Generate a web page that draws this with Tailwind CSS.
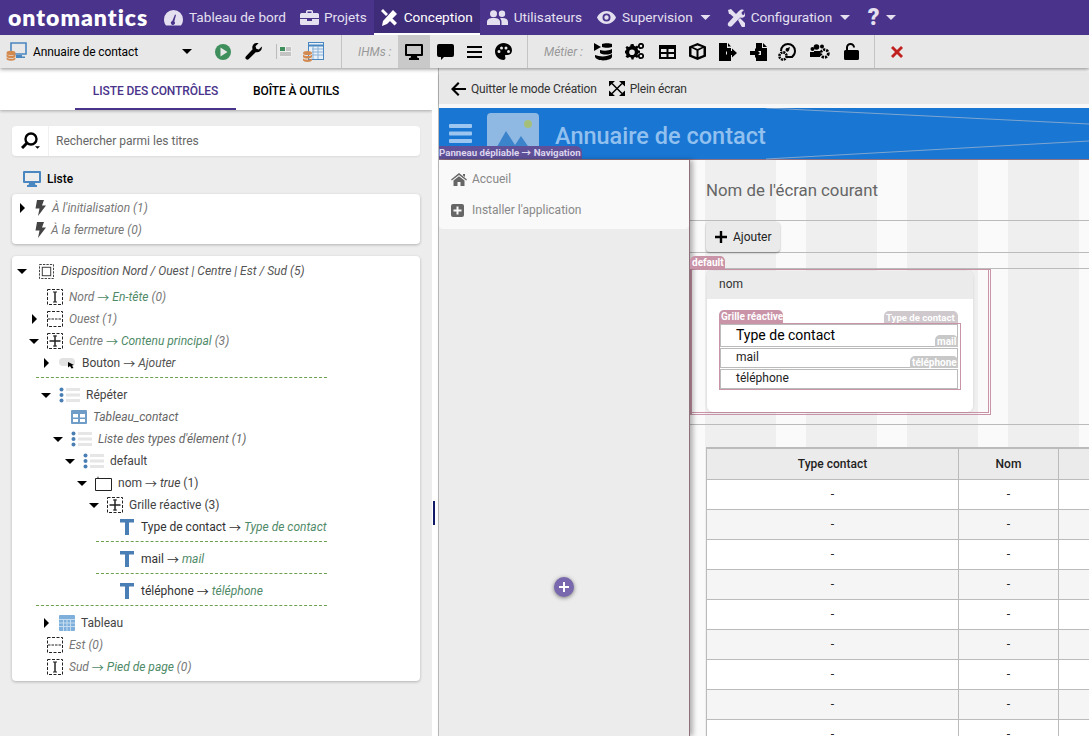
<!DOCTYPE html>
<html lang="fr">
<head>
<meta charset="utf-8">
<title>Ontomantics</title>
<script src="https://cdn.jsdelivr.net/npm/@tailwindcss/browser@4"></script>
</head>
<body class="m-0">
<svg class="hidden" xmlns="http://www.w3.org/2000/svg">
  <symbol id="cd" viewBox="0 0 10 5"><path d="M0 0h10L5 5z"/></symbol>
  <symbol id="cr" viewBox="0 0 5 10"><path d="M0 0l5 5-5 5z"/></symbol>
  <symbol id="lay-v" viewBox="0 0 16 16"><rect x=".5" y=".5" width="15" height="15" fill="none" stroke="#222" stroke-dasharray="3 1.500"/><path d="M8 3v10" stroke="#222" stroke-width="1.500" fill="none"/><path d="M6 3h4M6 13h4" stroke="#222" fill="none"/></symbol>
  <symbol id="lay-h" viewBox="0 0 16 16"><rect x=".5" y=".5" width="15" height="15" fill="none" stroke="#222" stroke-dasharray="3 1.500"/><path d="M1 8h14" stroke="#222" stroke-width="1.200" stroke-dasharray="2.500 1" fill="none"/></symbol>
  <symbol id="lay-c" viewBox="0 0 16 16"><rect x=".5" y=".5" width="15" height="15" fill="none" stroke="#222" stroke-dasharray="3 1.500"/><path d="M8 2.500v11M2.500 8h11" stroke="#222" stroke-width="1.500" fill="none"/><path d="M6 3h4M6 13h4" stroke="#222" fill="none"/></symbol>
  <symbol id="lay-d" viewBox="0 0 16 16"><rect x=".5" y=".5" width="15" height="15" fill="none" stroke="#333" stroke-dasharray="2.500 1.200"/><rect x="3.500" y="3.500" width="9" height="9" fill="none" stroke="#333"/></symbol>
  <symbol id="bolt" viewBox="0 0 11 16"><path d="M2 0h7L7 5.500h4L3 16l1.500-7.500H.5z" fill="#444"/></symbol>
  <symbol id="list" viewBox="0 0 21 16"><circle cx="2.500" cy="2.500" r="2" fill="#4a7fb5"/><circle cx="2.500" cy="8" r="2" fill="#4a7fb5"/><circle cx="2.500" cy="13.500" r="2" fill="#4a7fb5"/><path d="M7 1h14v3H7zM7 6.500h14v3H7zM7 12h14v3H7z" fill="#e6e6e6"/></symbol>
  <symbol id="tt" viewBox="0 0 14 16"><path d="M0 0h14v3.500H9V16H5V3.500H0z" fill="#4a7fb5"/></symbol>
  <symbol id="mon" viewBox="0 0 18 16"><path d="M1 0h16a1 1 0 0 1 1 1v10a1 1 0 0 1-1 1h-5l.5 2H14v2H4v-2h1.500l.5-2H1a1 1 0 0 1-1-1V1a1 1 0 0 1 1-1zm1 2v8h14V2z"/></symbol>
</svg>

<div class="w-[1089px] h-[736px] overflow-hidden flex flex-col bg-white text-[12px] text-[#222]" style="font-family:Roboto,'Liberation Sans',sans-serif">

  <!-- top navigation -->
  <header class="h-[35px] shrink-0 bg-[#49338b] flex items-stretch text-[13.6px] text-[#e4e0f0] z-30">
    <div class="ml-[8px] w-[140px] flex items-center text-white text-[23px] font-extrabold tracking-[1px] leading-none" style="font-family:Lato,sans-serif">ontomantics</div>
    <div class="ml-[16px] flex items-center gap-[6px]">
      <svg class="w-[19px] h-[16px]" viewBox="0 0 19 16" fill="#e4e0f0"><path d="M9.500 0A9.500 9.500 0 0 0 0 9.500c0 2.500.8 4.600 2 6h15c1.200-1.400 2-3.500 2-6A9.500 9.500 0 0 0 9.500 0zm.8 11.500a2 2 0 1 1-2-.5L11 4.500l1 .5z"/></svg>
      <span>Tableau de bord</span>
    </div>
    <div class="ml-[14px] flex items-center gap-[5px]">
      <svg class="w-[19px] h-[15px]" viewBox="0 0 19 15" fill="#e4e0f0"><path d="M6 3V1.500A1.500 1.500 0 0 1 7.500 0h4A1.500 1.500 0 0 1 13 1.500V3h4.500A1.500 1.500 0 0 1 19 4.500V8H0V4.500A1.500 1.500 0 0 1 1.500 3zm1.500 0h4V1.500h-4zM0 9h7v2h5V9h7v4.500a1.500 1.500 0 0 1-1.500 1.500h-16A1.500 1.500 0 0 1 0 13.500z"/></svg>
      <span>Projets</span>
    </div>
    <div class="ml-[7px] w-[106px] pl-[7px] pt-[2px] flex items-center gap-[6px] bg-[#3f2c78] text-white border-b-2 border-white">
      <svg class="w-[17px] h-[17px]" viewBox="0 0 17 17" fill="#fff"><path d="M2 0l5 5-2 2-5-5zM12 1l4 4-10 10-5 2 1-5zM11 9l5 5-2.500 2.500-5-5z"/></svg>
      <span>Conception</span>
    </div>
    <div class="ml-[7px] flex items-center gap-[6px]">
      <svg class="w-[21px] h-[15px]" viewBox="0 0 21 15" fill="#e4e0f0"><circle cx="6.500" cy="3.800" r="3.500"/><circle cx="15" cy="3.800" r="3.200"/><path d="M0 15v-3c0-2.500 2-4 6.500-4S13 9.500 13 12v3zM14.500 15v-3c0-1.500-.5-2.800-1.500-3.800.7-.2 1.400-.2 2-.2 4 0 6 1.500 6 4v3z"/></svg>
      <span>Utilisateurs</span>
    </div>
    <div class="ml-[15px] flex items-center gap-[6px]">
      <svg class="w-[19px] h-[13px]" viewBox="0 0 19 13" fill="#e4e0f0"><path fill-rule="evenodd" d="M9.500 0C14 0 17.500 3 19 6.500 17.500 10 14 13 9.500 13S1.500 10 0 6.500C1.500 3 5 0 9.500 0zm0 2.500a4 4 0 1 0 0 8 4 4 0 0 0 0-8zm0 1.800a2.200 2.200 0 1 1 0 4.400 2.200 2.200 0 0 1 0-4.400z"/></svg>
      <span>Supervision</span>
      <svg class="ml-[1px] w-[11px] h-[5px] fill-[#e4e0f0]"><use href="#cd"/></svg>
    </div>
    <div class="ml-[16px] flex items-center gap-[6px]">
      <svg class="w-[18px] h-[18px]" viewBox="0 0 18 18" fill="#e4e0f0"><path d="M1 1l3-1 5 5 3-3c1-1.500 3.500-2 5-1l-2.500 2.500.5 2 2 .5L18 3c1 1.500.5 4-1 5-1.500 1-3 1-4 .5L5 17c-1 1-2.500 1-3.500 0s-1-2.500 0-3.500L6.500 8 3 5H2zM11 11l2-2 5 5c1 1 1 2.500 0 3.500s-2.500 1-3.500 0z"/></svg>
      <span>Configuration</span>
      <svg class="ml-[1px] w-[12px] h-[5px] fill-[#e4e0f0]"><use href="#cd"/></svg>
    </div>
    <div class="ml-[16px] flex items-center gap-[6px]">
      <span class="w-[13px] text-[23px] font-black leading-none text-center">?</span>
      <svg class="w-[10px] h-[5px] fill-[#e4e0f0]"><use href="#cd"/></svg>
    </div>
  </header>

  <!-- main toolbar -->
  <div class="h-[33px] shrink-0 bg-[#e8e8e8] flex items-center shadow-[0_1px_4px_rgba(0,0,0,0.45)] z-20 relative text-black">
    <svg class="ml-[6px] w-[21px] h-[19px]" viewBox="0 0 21 19"><path d="M5 1h15v11H5z" fill="none" stroke="#4a86c0" stroke-width="1.600"/><path d="M10 13h6v1.500h3V16h-9z" fill="#4a86c0"/><ellipse cx="5" cy="11" rx="4.500" ry="2.200" fill="#d48a4e"/><path d="M.5 12v2.200c0 1 2 2 4.500 2s4.500-1 4.500-2V12c-1 1-2.500 1.800-4.500 1.800S1.500 13 .5 12z" fill="#d48a4e"/><path d="M.5 15.500v1.300c0 1 2 2 4.500 2s4.500-1 4.500-2v-1.300c-1 .9-2.500 1.400-4.500 1.400s-3.500-.5-4.500-1.400z" fill="#d48a4e"/></svg>
    <span class="ml-[6px] w-[149px] tracking-[-0.1px]">Annuaire de contact</span>
    <svg class="w-[10px] h-[5px]"><use href="#cd"/></svg>
    <svg class="ml-[23px] w-[16px] h-[16px]" viewBox="0 0 16 16"><circle cx="8" cy="8" r="8" fill="#3f8f5c"/><path d="M5.500 3.500l7 4.500-7 4.500z" fill="#e8e8e8"/></svg>
    <svg class="ml-[14px] w-[17px] h-[17px]" viewBox="0 0 17 17"><path d="M16.800 3.500l-3 3-2.500-.8-.8-2.500 3-3c-2-.6-4.200 0-5.300 1.500-1 1.300-1.200 3-.6 4.500L.8 13.400a2 2 0 0 0 2.800 2.800l7.100-7a5 5 0 0 0 6.100-5.700z"/></svg>
    <svg class="ml-[14px] w-[16px] h-[15px]" viewBox="0 0 16 15"><path d="M.5 0v15" stroke="#bbb"/><rect x="3" y="2" width="13" height="11" fill="#eee"/><rect x="4" y="3" width="5" height="4" fill="#3f8f5c"/><path d="M10 4h5M10 6h5M4 9h11M4 11h11" stroke="#999"/></svg>
    <svg class="ml-[11px] w-[21px] h-[20px]" viewBox="0 0 21 20"><rect x="5.500" y=".5" width="15" height="17" fill="#e8f0f8" stroke="#4a86c0"/><path d="M5.500 3.500h15" stroke="#4a86c0" stroke-width="2"/><path d="M9 7h11M9 10h11M9 13h11M10 4v13M15 4v13" stroke="#8ab0d6"/><ellipse cx="4.500" cy="11" rx="4.500" ry="2" fill="#d48a4e"/><path d="M0 12.500c1 1 2.500 1.500 4.500 1.500s3.500-.5 4.500-1.500V15c0 .8-2 1.500-4.500 1.500S0 15.800 0 15zM0 16.500c1 .8 2.500 1.200 4.500 1.200s3.500-.4 4.500-1.200v1.500c0 1-2 2-4.500 2S0 19 0 18z" fill="#d48a4e"/></svg>
    <div class="ml-[17px] w-px h-full bg-[#c4c4c4]"></div>
    <span class="ml-[16px] w-[40px] italic text-[#999]">IHMs :</span>
    <div class="w-[32px] h-full bg-[#c9c9c9] flex items-center justify-center"><svg class="w-[18px] h-[16px]"><use href="#mon"/></svg></div>
    <svg class="ml-[7px] w-[17px] h-[16px]" viewBox="0 0 17 16"><path d="M2 0h13a2 2 0 0 1 2 2v9a2 2 0 0 1-2 2H7l-3 3v-3H2a2 2 0 0 1-2-2V2a2 2 0 0 1 2-2z"/></svg>
    <svg class="ml-[13px] w-[15px] h-[12px]" viewBox="0 0 15 12"><path d="M0 0h15v2H0zM0 5h15v2H0zM0 10h15v2H0z"/></svg>
    <svg class="ml-[13px] w-[17px] h-[17px]" viewBox="0 0 17 17"><path fill-rule="evenodd" d="M8.500 0C13 0 17 3 17 7.500c0 3-2.300 4.500-4.500 4.500H11c-1 0-1.300 1-.8 1.700.5.800.4 3.300-1.700 3.300C4 17 0 13.300 0 8.500S4 0 8.500 0zM4 7a1.500 1.500 0 1 0 0 3 1.500 1.500 0 0 0 0-3zm2.500-3.500a1.500 1.500 0 1 0 0 3 1.500 1.500 0 0 0 0-3zm4.500 0a1.500 1.500 0 1 0 0 3 1.500 1.500 0 0 0 0-3zm2.500 3.500a1.500 1.500 0 1 0 0 3 1.500 1.500 0 0 0 0-3z"/></svg>
    <div class="ml-[15px] w-px h-full bg-[#c4c4c4]"></div>
    <span class="ml-[16px] w-[50px] italic text-[#999]">Métier :</span>
    <svg class="w-[18px] h-[18px]" viewBox="0 0 18 18"><path d="M0 0l7 4-7 4zM8 1c2-1 8-1 10 0v3c-2 1-8 1-10 0zM6 7c4 1 8 1 12-1v4c-3 2-9 2-12 0zM1 12c5 2 12 2 17-1v3c-1 4-15 5-17 0z"/></svg>
    <svg class="ml-[13px] w-[19px] h-[17px]" viewBox="0 0 19 17"><path fill-rule="evenodd" d="M7 3l1.500 0 .5 1.800 1.600.7L12 4.500l1.500 1.500-1 1.600.7 1.700 1.800.4v2l-1.800.5-.7 1.600 1 1.600-1.500 1.500-1.400-1-1.700.7-.4 1.800h-2l-.5-1.800-1.600-.7-1.600 1L.5 15.800l1-1.600-.7-1.700-1.800-.4v-2l1.800-.5.7-1.600-1-1.600L2 5l1.500 1 1.700-.7L5.500 3.500zM7 8.500a2.800 2.800 0 1 0 0 5.600 2.800 2.800 0 0 0 0-5.600z" transform="translate(0 -2)"/><circle cx="16" cy="3" r="2.200" fill="none" stroke="#000" stroke-width="1.800"/><circle cx="16" cy="13" r="2.200" fill="none" stroke="#000" stroke-width="1.800"/></svg>
    <svg class="ml-[15px] w-[17px] h-[14px]" viewBox="0 0 17 14"><path fill-rule="evenodd" d="M0 0h17v14H0zm2 4v3h5.500V4zm7.500 0v3H15V4zM2 9v3h5.500V9zm7.500 0v3H15V9z"/></svg>
    <svg class="ml-[13px] w-[17px] h-[17px]" viewBox="0 0 17 17"><path fill-rule="evenodd" d="M8.500 0L17 3.500v10L8.500 17 0 13.500v-10zM2.500 5v7l5 2V7.500zm12 0l-5 2.500V14l5-2zM8.500 2.500L4 4l4.500 2L13 4z"/></svg>
    <svg class="ml-[13px] w-[18px] h-[18px]" viewBox="0 0 18 18"><path d="M0 0h8v5h4v3.500H7v3h5V18H0zM9 0l3 3.500H9zM13 8V5.500L18 10l-5 4.500V12H8V8z"/></svg>
    <svg class="ml-[13px] w-[17px] h-[18px]" viewBox="0 0 17 18"><path d="M6 0h6v5h5v13H6v-6h5V8H6zM13 0l4 4h-4zM0 8h5V5l5 5-5 5v-3H0z"/></svg>
    <svg class="ml-[11px] w-[19px] h-[18px]" viewBox="0 0 19 18"><path d="M10 0a8 8 0 0 1 8 8c0 3-1.500 5-3.500 7H9v-2h4.500c1.500-1.500 2.500-3 2.500-5a6 6 0 0 0-12 0H2a8 8 0 0 1 8-8zM9.500 5l2.500-1-1 3.500a1.800 1.800 0 1 1-1.500-2.500z"/><circle cx="5" cy="13" r="3.600" fill="none" stroke="#000" stroke-width="2.600" stroke-dasharray="2 .8"/></svg>
    <svg class="ml-[13px] w-[20px] h-[15px]" viewBox="0 0 20 15"><circle cx="6.500" cy="3" r="2.800"/><circle cx="2.500" cy="5" r="2"/><path d="M0 8h4v5H0zM4 7h7l-1 6H4z"/><circle cx="14.500" cy="9.500" r="3.800" fill="none" stroke="#000" stroke-width="2.800" stroke-dasharray="2.200 1"/><circle cx="12" cy="2.500" r="2"/></svg>
    <svg class="ml-[14px] w-[15px] h-[17px]" viewBox="0 0 15 17"><path d="M2 7V4.500a4.500 4.500 0 0 1 9 0H9a2.500 2.500 0 0 0-5 0V7h9.500A1.500 1.500 0 0 1 15 8.500v7a1.500 1.500 0 0 1-1.500 1.500h-12A1.500 1.500 0 0 1 0 15.500v-7A1.500 1.500 0 0 1 1.500 7z"/></svg>
    <div class="ml-[15px] w-px h-full bg-[#c4c4c4]"></div>
    <svg class="ml-[16px] w-[12px] h-[12px]" viewBox="0 0 12 12"><path d="M2 0l4 4 4-4 2 2-4 4 4 4-2 2-4-4-4 4-2-2 4-4-4-4z" fill="#c0211f"/></svg>
  </div>

  <div class="flex-1 min-h-0 flex">
    <!-- left panel -->
    <aside class="w-[432px] shrink-0 bg-[#ededed] flex flex-col">
      <div class="h-[42px] shrink-0 bg-white shadow-[0_1px_3px_rgba(0,0,0,0.3)] flex items-stretch font-medium tracking-[-0.1px]">
        <div class="ml-[75px] w-[161px] pt-[5px] flex items-center justify-center text-[#49338b] border-b-2 border-[#49338b]">LISTE DES CONTRÔLES</div>
        <div class="ml-[17px] pt-[3px] flex items-center text-black">BOÎTE À OUTILS</div>
      </div>
      <div class="mx-[12px] mt-[16px] h-[30px] bg-white rounded-[4px] flex items-center shadow-[0_1px_2px_rgba(0,0,0,0.08)]">
        <div class="w-[37px] h-full border-r border-[#f0f0f0] relative shrink-0">
          <svg class="absolute left-[9px] top-[6px] w-[17px] h-[17px]" viewBox="0 0 17 17"><circle cx="10" cy="7" r="5.500" fill="none" stroke="#000" stroke-width="2.400"/><path d="M6 11l-5 5" stroke="#000" stroke-width="3"/></svg>
          <svg class="absolute left-[23px] top-[20px] w-[5px] h-[3px]"><use href="#cd"/></svg>
        </div>
        <span class="ml-[7px] text-[#666]">Rechercher parmi les titres</span>
      </div>
      <div class="mt-[13px] ml-[23px] h-[20px] flex items-center gap-[6px] font-medium text-black">
        <svg class="w-[18px] h-[16px] fill-[#4a86c0]"><use href="#mon"/></svg><span>Liste</span>
      </div>
      <div class="mx-[12px] mt-[5px] h-[50px] bg-white rounded-[4px] shadow-[0_1px_3px_rgba(0,0,0,0.25)] italic text-[#777] flex flex-col pt-[3px]">
        <div class="h-[22px] flex items-center pl-[8px]">
          <svg class="w-[5px] h-[10px]"><use href="#cr"/></svg>
          <svg class="ml-[10px] w-[11px] h-[16px]"><use href="#bolt"/></svg>
          <span class="ml-[6px]">À l'initialisation (1)</span>
        </div>
        <div class="h-[22px] flex items-center pl-[23px]">
          <svg class="w-[11px] h-[16px]"><use href="#bolt"/></svg>
          <span class="ml-[5px]">À la fermeture (0)</span>
        </div>
      </div>
      <div class="mx-[12px] mt-[12px] h-[425px] bg-white rounded-[4px] shadow-[0_1px_3px_rgba(0,0,0,0.25)] flex flex-col pt-[4px]">
        <div class="h-[22px] flex items-center pl-[5px] italic text-[#555]">
          <svg class="w-[10px] h-[5px]"><use href="#cd"/></svg>
          <svg class="ml-[12px] w-[15px] h-[15px]"><use href="#lay-d"/></svg>
          <span class="ml-[7px]">Disposition Nord / Ouest | Centre | Est / Sud (5)</span>
        </div>
        <div class="h-[4px]"></div>
        <div class="h-[22px] flex items-center pl-[35px] italic text-[#777]">
          <svg class="w-[16px] h-[16px]"><use href="#lay-v"/></svg>
          <span class="ml-[6px]">Nord <span class="text-[#4f8a68]"><span class="font-['Noto_Sans_CJK_JP'] not-italic leading-none relative top-[2px]">→</span> En-tête</span> (0)</span>
        </div>
        <div class="h-[22px] flex items-center pl-[20px] italic text-[#777]">
          <svg class="w-[5px] h-[10px]"><use href="#cr"/></svg>
          <svg class="ml-[10px] w-[16px] h-[16px]"><use href="#lay-h"/></svg>
          <span class="ml-[6px]">Ouest (1)</span>
        </div>
        <div class="h-[22px] flex items-center pl-[17px] italic text-[#777]">
          <svg class="w-[10px] h-[5px]"><use href="#cd"/></svg>
          <svg class="ml-[8px] w-[16px] h-[16px]"><use href="#lay-c"/></svg>
          <span class="ml-[6px]">Centre <span class="text-[#4f8a68]"><span class="font-['Noto_Sans_CJK_JP'] not-italic leading-none relative top-[2px]">→</span> Contenu principal</span> (3)</span>
        </div>
        <div class="h-[22px] flex items-center pl-[32px] text-[#444]">
          <svg class="w-[5px] h-[10px]"><use href="#cr"/></svg>
          <svg class="ml-[10px] w-[16px] h-[11px]" viewBox="0 0 16 11"><rect y="0" width="16" height="8" rx="4" fill="#e2e2e2"/><path d="M9 4l6 3-2 .5 1.500 2.500-2 .5L11 8l-2 1.500z"/></svg>
          <span class="ml-[7px]">Bouton <span class="font-['Noto_Sans_CJK_JP'] leading-none relative top-[2px]">→</span> <i class="text-[#555]">Ajouter</i></span>
        </div>
        <div class="h-[10px] pt-[3px] pl-[24px]"><div class="w-[291px] border-t border-dashed border-[#6da04f]"></div></div>
        <div class="h-[22px] flex items-center pl-[29px] text-[#444]">
          <svg class="w-[10px] h-[5px]"><use href="#cd"/></svg>
          <svg class="ml-[8px] w-[21px] h-[16px]"><use href="#list"/></svg>
          <span class="ml-[6px]">Répéter</span>
        </div>
        <div class="h-[22px] flex items-center pl-[59px] italic text-[#666]">
          <svg class="w-[16px] h-[14px]" viewBox="0 0 16 14"><path fill-rule="evenodd" d="M1 0h14a1 1 0 0 1 1 1v12a1 1 0 0 1-1 1H1a1 1 0 0 1-1-1V1a1 1 0 0 1 1-1zm1 4v3.500h5V4zm7 0v3.500h5V4zM2 9v3h5V9zm7 0v3h5V9z" fill="#6f9dc8"/></svg>
          <span class="ml-[6px]">Tableau_contact</span>
        </div>
        <div class="h-[22px] flex items-center pl-[41px] italic text-[#666]">
          <svg class="w-[10px] h-[5px]"><use href="#cd"/></svg>
          <svg class="ml-[8px] w-[21px] h-[16px]"><use href="#list"/></svg>
          <span class="ml-[6px]">Liste des types d'élement (1)</span>
        </div>
        <div class="h-[22px] flex items-center pl-[53px] text-[#444]">
          <svg class="w-[10px] h-[5px]"><use href="#cd"/></svg>
          <svg class="ml-[8px] w-[21px] h-[16px]"><use href="#list"/></svg>
          <span class="ml-[6px]">default</span>
        </div>
        <div class="h-[22px] flex items-center pl-[65px] text-[#444]">
          <svg class="w-[10px] h-[5px]"><use href="#cd"/></svg>
          <svg class="ml-[8px] w-[17px] h-[15px]" viewBox="0 0 17 15"><path d="M.5 2.500h16v12H.5z" fill="none" stroke="#222"/><path d="M2 2l1-2 1 2z" fill="#777"/></svg>
          <span class="ml-[6px]">nom <span class="font-['Noto_Sans_CJK_JP'] leading-none relative top-[2px]">→</span> <i>true</i> (1)</span>
        </div>
        <div class="h-[22px] flex items-center pl-[77px] text-[#444]">
          <svg class="w-[10px] h-[5px]"><use href="#cd"/></svg>
          <svg class="ml-[8px] w-[16px] h-[16px]"><use href="#lay-c"/></svg>
          <span class="ml-[6px]">Grille réactive (3)</span>
        </div>
        <div class="h-[22px] flex items-center pl-[108px] text-[#333]">
          <svg class="w-[14px] h-[16px]"><use href="#tt"/></svg>
          <span class="ml-[7px]">Type de contact <span class="font-['Noto_Sans_CJK_JP'] leading-none relative top-[2px]">→</span> <i class="text-[#4f8a68]">Type de contact</i></span>
        </div>
        <div class="h-[10px] pt-[3px] pl-[84px]"><div class="w-[231px] border-t border-dashed border-[#6da04f]"></div></div>
        <div class="h-[22px] flex items-center pl-[108px] text-[#333]">
          <svg class="w-[14px] h-[16px]"><use href="#tt"/></svg>
          <span class="ml-[7px]">mail <span class="font-['Noto_Sans_CJK_JP'] leading-none relative top-[2px]">→</span> <i class="text-[#4f8a68]">mail</i></span>
        </div>
        <div class="h-[10px] pt-[3px] pl-[84px]"><div class="w-[231px] border-t border-dashed border-[#6da04f]"></div></div>
        <div class="h-[22px] flex items-center pl-[108px] text-[#333]">
          <svg class="w-[14px] h-[16px]"><use href="#tt"/></svg>
          <span class="ml-[7px]">téléphone <span class="font-['Noto_Sans_CJK_JP'] leading-none relative top-[2px]">→</span> <i class="text-[#4f8a68]">téléphone</i></span>
        </div>
        <div class="h-[10px] pt-[3px] pl-[24px]"><div class="w-[291px] border-t border-dashed border-[#6da04f]"></div></div>
        <div class="h-[22px] flex items-center pl-[32px] text-[#444]">
          <svg class="w-[5px] h-[10px]"><use href="#cr"/></svg>
          <svg class="ml-[10px] w-[16px] h-[16px]" viewBox="0 0 16 16"><rect width="16" height="16" rx="1" fill="#7fb0dc"/><path d="M0 4.500h16M0 8h16M0 11.500h16M4.500 4v12M8 4v12M11.500 4v12" stroke="#c6dcf0"/></svg>
          <span class="ml-[6px]">Tableau</span>
        </div>
        <div class="h-[22px] flex items-center pl-[35px] italic text-[#777]">
          <svg class="w-[16px] h-[16px]"><use href="#lay-h"/></svg>
          <span class="ml-[6px]">Est (0)</span>
        </div>
        <div class="h-[22px] flex items-center pl-[35px] italic text-[#777]">
          <svg class="w-[16px] h-[16px]"><use href="#lay-v"/></svg>
          <span class="ml-[6px]">Sud <span class="text-[#4f8a68]"><span class="font-['Noto_Sans_CJK_JP'] not-italic leading-none relative top-[2px]">→</span> Pied de page</span> (0)</span>
        </div>
      </div>
    </aside>

    <!-- splitter -->
    <div class="w-[6px] shrink-0 bg-white">
      <div class="ml-[1px] w-[2px] h-[24px] bg-[#111a66] mt-[433px]"></div>
    </div>

    <!-- design area -->
    <section class="flex-1 min-w-0 flex flex-col border-l border-[#bbb]">
      <div class="h-[5px] shrink-0 bg-[#f3f3f3]"></div>
      <div class="h-[31px] shrink-0 bg-[#e8e8e8] flex items-center text-[#333] tracking-[-0.17px] shadow-[0_1px_2px_rgba(0,0,0,0.3)]">
        <svg class="ml-[12px] w-[15px] h-[14px]" viewBox="0 0 15 14"><path d="M7 0l1.500 1.500L4 6h11v2H4l4.500 4.500L7 14 0 7z"/></svg>
        <span class="ml-[5px]">Quitter le mode Création</span>
        <svg class="ml-[12px] w-[16px] h-[15px]" viewBox="0 0 16 15"><path d="M3 2.500l10 10M13 2.500l-10 10" stroke="#000" stroke-width="1.500"/><path d="M0 0h6L0 5.500zM16 0h-6l6 5.500zM0 15h6L0 9.500zM16 15h-6l6-5.500z"/></svg>
        <span class="ml-[5px]">Plein écran</span>
      </div>
      <div class="h-[4px] shrink-0 bg-[#f7f7f7]"></div>

      <!-- app header -->
      <div class="h-[52px] shrink-0 bg-[#1976d2] relative flex items-center border-b border-[#8d6f80] z-10">
        <svg class="ml-[10px] w-[23px] h-[19px]" viewBox="0 0 23 19" fill="#9cc6f0"><rect width="23" height="4" rx="1"/><rect y="7.500" width="23" height="4" rx="1"/><rect y="15" width="23" height="4" rx="1"/></svg>
        <svg class="ml-[15px] w-[52px] h-[46px] self-start mt-[5px]" viewBox="0 0 52 46"><path d="M4 0h44a4 4 0 0 1 4 4v42H0V4a4 4 0 0 1 4-4z" fill="#8fb9e3"/><circle cx="41" cy="11" r="4" fill="#a5bf7a"/><path d="M7 39l12-21 9 14 6-9 11 16z" fill="#3b84cc"/></svg>
        <span class="ml-[16px] pt-[5px] text-[23.5px] font-medium text-[#92c0ef] whitespace-nowrap leading-[28px]">Annuaire de contact</span>
        <svg class="absolute left-[327px] top-0 w-[323px] h-[52px]" viewBox="0 0 323 52" fill="none" stroke="#7fa5cf"><path d="M0 0l323 16M0 51l323-18"/></svg>
        <div class="absolute left-0 top-[38px] h-[13px] w-[143px] bg-[#5f5098] rounded-tr-[6px] text-[9.7px] leading-[13px] font-bold text-[#dcd6ee] whitespace-nowrap">Panneau dépliable <span class="font-['Noto_Sans_CJK_JP'] leading-none relative top-[1px]">→</span> Navigation</div>
      </div>

      <div class="flex-1 min-h-0 flex">
        <!-- sidebar -->
        <nav class="w-[251px] shrink-0 bg-[#ececec] border-r border-[#8d7079] shadow-[3px_0_5px_rgba(0,0,0,0.3)] relative z-10 text-[#888]">
          <div class="h-[69px] bg-[#f9f9f9] rounded-b-[4px] flex flex-col pt-[7px]">
            <div class="h-[24px] flex items-center pl-[12px]">
              <svg class="w-[16px] h-[13px]" viewBox="0 0 16 13" fill="#666"><path d="M8 0l8 6.500-.8 1L8 2 .8 7.500 0 6.500zM2.500 7.500L8 3.200l5.500 4.300V13H9.500V9h-3v4h-4zM12 1h2v3l-2-1.500z"/></svg>
              <span class="ml-[5px]">Accueil</span>
            </div>
            <div class="mt-[7px] h-[24px] flex items-center pl-[12px]">
              <svg class="w-[13px] h-[13px]" viewBox="0 0 13 13" fill="#666"><path fill-rule="evenodd" d="M2 0h9a2 2 0 0 1 2 2v9a2 2 0 0 1-2 2H2a2 2 0 0 1-2-2V2a2 2 0 0 1 2-2zm3.500 2.500v3h-3v2h3v3h2v-3h3v-2h-3v-3z"/></svg>
              <span class="ml-[8px]">Installer l'application</span>
            </div>
          </div>
          <div class="absolute left-[115px] top-[417px] w-[20px] h-[20px] rounded-full bg-[#7a68ae] shadow-[0_1px_4px_rgba(0,0,0,0.5)] flex items-center justify-center">
            <svg class="w-[10px] h-[10px]" viewBox="0 0 10 10" fill="#fff"><path d="M4 0h2v4h4v2H6v4H4V6H0V4h4z"/></svg>
          </div>
        </nav>

        <!-- page -->
        <main class="flex-1 min-w-0 flex flex-col bg-[repeating-linear-gradient(90deg,#fafafa_0,#fafafa_15px,#efefef_15px,#efefef_86px,#fafafa_86px,#fafafa_101px)] overflow-hidden">
          <div class="h-[61px] shrink-0 border-b border-[#bbb] flex items-center pl-[16px] pt-[2px] text-[16.8px] text-[#666]">Nom de l'écran courant</div>
          <div class="h-[32px] shrink-0 border-b border-[#bbb] flex items-center pl-[16px]">
            <div class="w-[74px] h-[30px] bg-[#eaeaea] rounded-[4px] shadow-[0_1px_2px_rgba(0,0,0,0.35)] flex items-center text-[#222]">
              <svg class="ml-[9px] w-[12px] h-[12px]" viewBox="0 0 12 12"><path d="M4.800 0h2.400v4.800H12v2.400H7.200V12H4.800V7.200H0V4.800h4.800z"/></svg>
              <span class="ml-[6px]">Ajouter</span>
            </div>
          </div>
          <div class="h-[15px] shrink-0 relative">
            <div class="absolute left-0 top-[3px] h-[13px] w-[35px] bg-[#c994a8] rounded-t-[5px] text-[10px] leading-[14px] font-bold text-white pl-[2px] z-10">default</div>
          </div>
          <div class="h-[157px] shrink-0 border-t border-[#bbb] border-b">
            <div class="w-[301px] h-[146px] border border-[#c994a8] border-l-[2px] pr-[1px] pb-[1px]">
              <div class="w-[297px] h-[143px] border-r border-b border-[#c994a8] pl-[15px] pt-[1px]">
                <div class="w-[266px] h-[141px] bg-white rounded-[6px] shadow-[0_0_3px_rgba(0,0,0,0.12)] overflow-hidden">
                  <div class="h-[28px] bg-[#ebebeb] flex items-center pl-[12px] pb-[2px] text-[#333]">nom</div>
                  <div class="relative pt-[24px] pl-[12px]">
                    <div class="absolute left-[12px] top-[11px] h-[13px] w-[64px] bg-[#c994a8] rounded-t-[5px] text-[10px] leading-[14px] font-bold text-white pl-[2px] whitespace-nowrap">Grille réactive</div>
                    <div class="absolute left-[177px] top-[12px] h-[12px] w-[74px] bg-[#cfc8cc] rounded-t-[5px] text-[9.6px] leading-[13px] font-bold text-white pl-[2px] whitespace-nowrap">Type de contact</div>
                    <div class="absolute left-[228px] top-[36px] h-[12px] w-[23px] bg-[#c8c8c8] rounded-t-[5px] text-[10px] leading-[14px] font-bold text-white pl-[2px] z-10">mail</div>
                    <div class="absolute left-[203px] top-[57px] h-[12px] w-[48px] bg-[#c8c8c8] rounded-t-[5px] text-[10px] leading-[14px] font-bold text-white pl-[2px] z-10">téléphone</div>
                    <div class="w-[242px] h-[67px] border border-[#c994a8]">
                      <div class="w-[238px] h-[23px] border border-[#bbb] flex items-center pl-[15px] text-[14px] text-black">Type de contact</div>
                      <div class="mt-[1px] w-[238px] h-[20px] border border-[#bbb] flex items-center pl-[15px] pb-[2px] text-[#222]">mail</div>
                      <div class="mt-[1px] w-[238px] h-[20px] border border-[#bbb] flex items-center pl-[15px] pb-[2px] text-[#222]">téléphone</div>
                    </div>
                  </div>
                </div>
              </div>
            </div>
          </div>
          <div class="h-[22px] shrink-0"></div>
          <div class="pl-[16px] shrink-0">
            <table class="w-[500px] table-fixed border-collapse text-[#222]">
              <thead>
                <tr class="h-[31px] bg-[#ebebeb]"><th class="w-[252px] border border-t-[2px] border-[#bbb] font-medium">Type contact</th><th class="w-[100px] border border-t-[2px] border-[#bbb] font-medium">Nom</th><th class="border border-t-[2px] border-[#bbb]"></th></tr>
              </thead>
              <tbody class="text-center">
                <tr class="h-[30px] bg-white"><td class="border border-[#bbb]">-</td><td class="border border-[#bbb]">-</td><td class="border border-[#bbb]"></td></tr>
                <tr class="h-[30px] bg-[#f5f5f5]"><td class="border border-[#bbb]">-</td><td class="border border-[#bbb]">-</td><td class="border border-[#bbb]"></td></tr>
                <tr class="h-[30px] bg-white"><td class="border border-[#bbb]">-</td><td class="border border-[#bbb]">-</td><td class="border border-[#bbb]"></td></tr>
                <tr class="h-[30px] bg-[#f5f5f5]"><td class="border border-[#bbb]">-</td><td class="border border-[#bbb]">-</td><td class="border border-[#bbb]"></td></tr>
                <tr class="h-[30px] bg-white"><td class="border border-[#bbb]">-</td><td class="border border-[#bbb]">-</td><td class="border border-[#bbb]"></td></tr>
                <tr class="h-[30px] bg-[#f5f5f5]"><td class="border border-[#bbb]">-</td><td class="border border-[#bbb]">-</td><td class="border border-[#bbb]"></td></tr>
                <tr class="h-[30px] bg-white"><td class="border border-[#bbb]">-</td><td class="border border-[#bbb]">-</td><td class="border border-[#bbb]"></td></tr>
                <tr class="h-[30px] bg-[#f5f5f5]"><td class="border border-[#bbb]">-</td><td class="border border-[#bbb]">-</td><td class="border border-[#bbb]"></td></tr>
                <tr class="h-[30px] bg-white"><td class="border border-[#bbb]">-</td><td class="border border-[#bbb]">-</td><td class="border border-[#bbb]"></td></tr>
              </tbody>
            </table>
          </div>
        </main>
      </div>
    </section>
  </div>
</div>
</body>
</html>
